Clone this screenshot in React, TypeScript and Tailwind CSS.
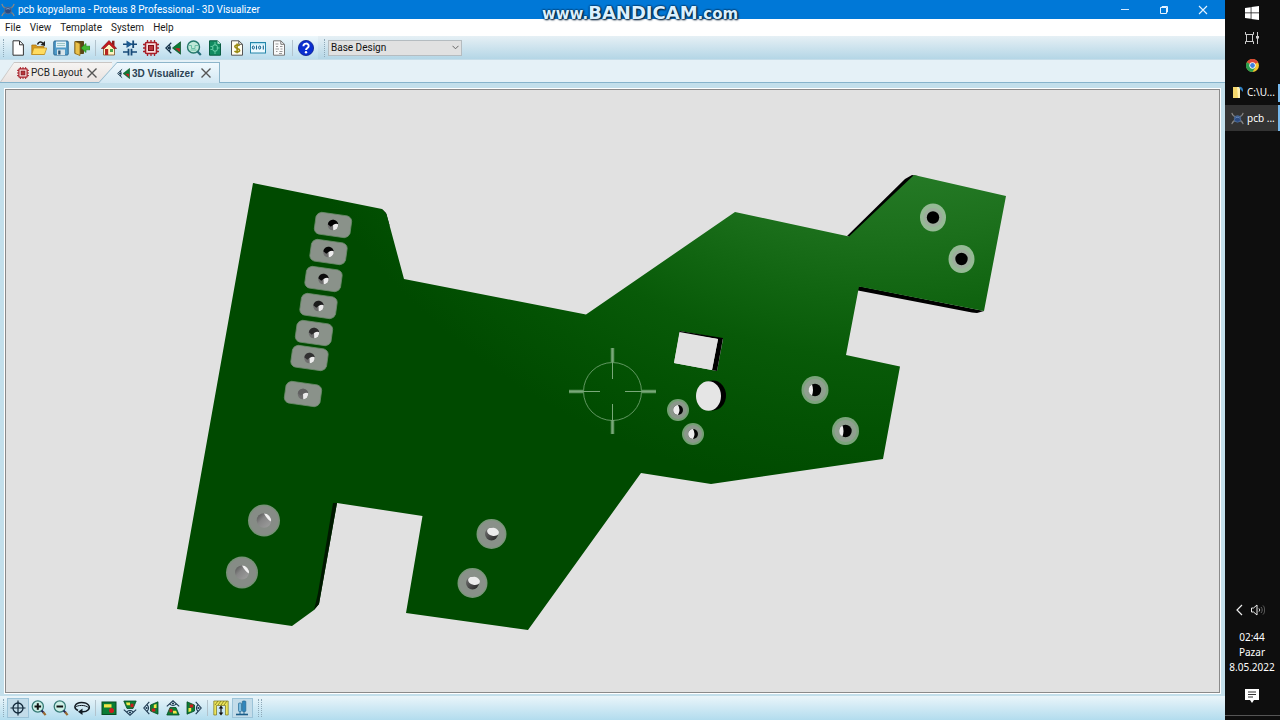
import type { ReactNode } from 'react';

const UI = "font-['Roboto','Open_Sans',sans-serif]";
const TRAY = "font-['Noto_Sans','Open_Sans',sans-serif]";
const FORM = "font-['Roboto','Liberation_Sans',sans-serif]";

function Icon({ children, size = 16 }: { children: ReactNode; size?: number }) {
  return (
    <svg width={size} height={size} viewBox="0 0 16 16" fill="none" aria-hidden="true">
      {children}
    </svg>
  );
}

const NewIcon = () => (
  <Icon>
    <path d="M3 .8h6.600L13.400 4.600V15.200H3z" fill="#fff" stroke="#333" />
    <path d="M9.500 1v3.800h3.800" stroke="#333" />
  </Icon>
);
const OpenIcon = () => (
  <Icon>
    <path d="M.8 14.500V5h4.200l1 1.500h7v8z" fill="#d79a1c" stroke="#a8700c" strokeWidth=".7" />
    <path d="M.8 14.500 2.800 8H15.800l-2.300 6.500z" fill="#ffdc60" stroke="#b98a1c" strokeWidth=".7" />
    <path d="M6.500 4.500C7.500 1.500 10.500 1.200 12 3.500" stroke="#222" strokeWidth="1.600" />
    <path d="M14 1v5L9.500 5z" fill="#222" />
  </Icon>
);
const SaveIcon = () => (
  <Icon>
    <rect x=".8" y="1" width="14.400" height="14" rx="1" fill="#4f9bc9" stroke="#2b668f" />
    <rect x="3" y="1.500" width="10" height="6" fill="#e2f0f6" />
    <path d="M4 3.500h8M4 5.500h8" stroke="#8bb" strokeWidth=".8" />
    <rect x="4" y="9.500" width="8" height="5.500" fill="#d7e4ea" />
    <rect x="5.200" y="10.500" width="2.300" height="4" fill="#28506e" />
  </Icon>
);
const ExitIcon = () => (
  <Icon>
    <path d="M1 1.500h8.500v12H1z" fill="#5b4718" stroke="#5b4718" />
    <path d="M1 1.500 6 3.500V15.500L1 13.500z" fill="#e9c04a" stroke="#8b6714" strokeWidth=".8" />
    <path d="M16 6.200h-4V3.500L7 8l5 4.500V9.800h4z" fill="#42b834" stroke="#1e7d18" strokeWidth=".6" />
  </Icon>
);
const HomeIcon = () => (
  <Icon>
    <path d="M2.500 7v8h11V7L8 2z" fill="#fff5c0" stroke="#7c4c24" strokeWidth=".8" />
    <path d="M11 .8h2.500V6L11 4z" fill="#8c1c1c" />
    <path d="M8 .5.3 8.500h3L8 4l4.700 4.500h3z" fill="#c8161d" stroke="#701014" strokeWidth=".6" />
    <rect x="4" y="9" width="3.200" height="6" fill="#b52420" />
    <rect x="9" y="9" width="3" height="3" fill="#4aa54c" />
  </Icon>
);
const SchematicIcon = () => (
  <Icon>
    <path d="M1 4.200h14M1 12h5.200M9.800 12H15" stroke="#174a78" strokeWidth="1.400" />
    <path d="M4.500.5v7.400l6-3.700z" fill="#1d5b91" />
    <path d="M11.200.5v7.400M6.500 8.800v6.700M9.500 8.800v6.700" stroke="#174a78" strokeWidth="1.800" />
  </Icon>
);
const ChipIcon = ({ size = 16 }: { size?: number }) => (
  <Icon size={size}>
    <path d="M4.500 0v16M8 0v16M11.500 0v16M0 4.500h16M0 8h16M0 11.500h16" stroke="#a72028" strokeWidth="1.300" />
    <rect x="2.500" y="2.500" width="11" height="11" rx="1" fill="#f7dada" stroke="#a81d27" strokeWidth="1.600" />
    <rect x="5.500" y="5.500" width="5" height="5" fill="#b9343a" stroke="#7e1018" />
  </Icon>
);
const VisualizerIcon = ({ size = 16 }: { size?: number }) => (
  <Icon size={size}>
    <path d="M7.500 8 15.500 1.800v12.400z" fill="#0b7d35" stroke="#0a4a22" strokeWidth=".7" />
    <path d="M10 8.200h4.800v4z" fill="#c61f21" />
    <path d="M6.300 2.800.8 8l5.500 5.200M4 4.800c1.500 1.800 1.500 4.600 0 6.400" stroke="#16334a" strokeWidth="1.200" />
    <circle cx="3.800" cy="8" r="1.300" fill="#16334a" />
  </Icon>
);
const SearchIcon = () => (
  <Icon>
    <circle cx="7.500" cy="7" r="6" fill="#bfe9d8" stroke="#25786b" strokeWidth="1.400" />
    <path d="M3 5.500h2.500v3H9v-3h3M4.500 10h6" stroke="#6bbfa6" />
    <path d="m11.500 11.500 3.300 3.500" stroke="#256d79" strokeWidth="2.200" />
  </Icon>
);
const GerberIcon = () => (
  <Icon>
    <path d="M2.500.8h8l3 3v11.400h-11z" fill="#118b60" stroke="#0a5d42" />
    <path d="M10.500.8v3h3z" fill="#ccefe0" />
    <rect x="5.800" y="5" width="4.500" height="6" rx="1.500" stroke="#74d8b0" />
    <path d="M8 2v3m0 6v3M3.500 6.500h2M3.500 9.500h2M10.500 8h2" stroke="#74d8b0" strokeWidth=".8" />
  </Icon>
);
const BomIcon = () => (
  <Icon>
    <path d="M2.500.8h7.300l3.700 3.500v10.900h-11z" fill="#fffdf0" stroke="#555" />
    <path d="M9.800.8v3.500h3.700" stroke="#555" />
    <path d="M10.500 5.800C9.500 4.500 5.800 4.500 5.800 6.600c0 2.300 4.800 1.300 4.800 3.700 0 2.200-3.900 2.200-5.100.8M8.100 3.500v9.800" stroke="#9a8b10" strokeWidth="1.600" />
  </Icon>
);
const BinaryIcon = () => (
  <Icon>
    <rect x=".5" y="2.500" width="15" height="10.500" fill="#edfaff" stroke="#2486aa" />
    <path d="M1 3.800h14" stroke="#8fd3ea" />
    <rect x="2.300" y="6" width="2" height="3" rx="1" stroke="#16648f" />
    <path d="M6.500 5.500v4M13.300 5.500v4" stroke="#16648f" strokeWidth="1.100" />
    <rect x="8.700" y="6" width="2" height="3" rx="1" stroke="#16648f" />
  </Icon>
);
const NotesIcon = () => (
  <Icon>
    <path d="M2.500.8h7.300l3.700 3.500v10.900h-11z" fill="#fafafa" stroke="#777" />
    <path d="M9.800.8v3.500h3.700" stroke="#777" />
    <path d="M4.500 4h3M5 6.500h2m2 0h2.500M4.500 9H8m1.500 0h2M5 11.500h1.500m2 0h3M8 13.500h3" stroke="#999" />
  </Icon>
);
const HelpIcon = () => (
  <Icon>
    <circle cx="8" cy="8" r="7.600" fill="#0a2fd0" stroke="#0a1d8c" strokeWidth=".8" />
    <path d="M5.400 6.200C5.400 2.700 10.700 2.800 10.700 5.900 10.700 8 8 7.800 8 10" stroke="#fff" strokeWidth="1.900" />
    <circle cx="8" cy="12.300" r="1.200" fill="#fff" />
  </Icon>
);
const TargetIcon = () => (
  <Icon>
    <circle cx="8" cy="8" r="5" stroke="#12283a" strokeWidth="1.300" />
    <path d="M8 .5v15M.5 8h15" stroke="#12283a" strokeWidth="1.200" />
  </Icon>
);
const ZoomIcon = ({ plus = false }: { plus?: boolean }) => (
  <Icon>
    <circle cx="6.800" cy="6.500" r="5.600" fill="#ccefe6" stroke="#377b76" strokeWidth="1.300" />
    <path d="M3.500 6.500h6.600" stroke="#111" strokeWidth="2" />
    {plus && <path d="M6.800 3.200v6.600" stroke="#111" strokeWidth="2" />}
    <path d="m10.500 10.500 2.500 2.500" stroke="#225" strokeWidth="1.800" />
    <path d="m12.300 12.300 2.300 2.800" stroke="#9b6a32" strokeWidth="2.200" />
  </Icon>
);
const OrbitIcon = () => (
  <Icon>
    <path d="M4 10.500C-1.500 8 1 2.500 7.500 2.500c7 0 9.500 4.500 6.500 7.500-1.500 1.600-3.500 2-6 1.800" stroke="#111a22" strokeWidth="1.500" />
    <path d="M1.200 7.500C3 4.800 12 4.500 14.800 8" stroke="#111a22" />
    <path d="M8.500 8.500v6.500L4 11.800z" fill="#111a22" />
  </Icon>
);
const TopViewIcon = () => (
  <Icon>
    <rect x="1" y="2" width="14" height="12.500" fill="#0b7d35" stroke="#094c23" />
    <rect x="3" y="4.200" width="7.500" height="3.300" fill="#f1e848" />
    <circle cx="10.500" cy="10.500" r="2.500" fill="#cf1c1e" />
  </Icon>
);
const SideView = ({ turn }: { turn: string }) => (
  <Icon>
    <g transform={turn}>
      <path d="M7.500 5 15 1.800v12.400L7.500 11z" fill="#0b7d35" stroke="#094c23" strokeWidth=".8" />
      <path d="M10.800 4.800 13.500 4v4h-2.700z" fill="#f1e848" />
      <rect x="8.800" y="8.500" width="3.500" height="3" fill="#cf1c1e" />
      <path d="M6.300 1.800.8 8l5.500 6.200M4.200 4.800c1.500 1.800 1.500 4.600 0 6.400" stroke="#1d3850" strokeWidth="1.100" />
      <circle cx="3.500" cy="8" r="1.100" fill="#1d3850" />
    </g>
  </Icon>
);
const HeightIcon = () => (
  <Icon>
    <path d="M.8 1h14.400v14h-2.700V5.500h-9V15H.8z" fill="#ece45b" stroke="#77731c" strokeWidth=".7" />
    <path d="m2 5 3-4m0 4 3-4m0 4 3-4m0 4 3-4" stroke="#77731c" strokeWidth=".8" />
    <path d="M8 7v7" stroke="#111" strokeWidth="1.200" />
    <path d="m8 5.500 2.300 3H5.700zM8 15.500l2.300-3H5.700z" fill="#111" />
  </Icon>
);
const ComponentsIcon = () => (
  <Icon>
    <path d="M2 14.500h12" stroke="#1a5b87" strokeWidth="1.600" />
    <rect x="4.500" y="3" width="3" height="8.500" rx=".8" fill="#7bbce0" stroke="#216792" strokeWidth=".7" />
    <rect x="8.300" y="1" width="3.500" height="10.500" rx=".8" fill="#2f86bd" stroke="#216792" strokeWidth=".7" />
    <path d="M6 11.500v3M10 11.500v3" stroke="#216792" />
  </Icon>
);
const ProteusIcon = ({ size = 14 }: { size?: number }) => (
  <Icon size={size}>
    <path d="M1 1C2 5 4 6 8 6s6-1 7-5M1 15C2 11 4 10 8 10s6 1 7 5" stroke="#8d8a88" strokeWidth="1.400" />
    <path d="M2.500 4 6 7.500 3 13M13.500 4 10 7.500 13 13" stroke="#66727c" />
    <circle cx="8" cy="8.500" r="4" fill="#2b4a80" stroke="#50709b" />
    <path d="M5.500 7.500c1-1.500 4-1.500 5 0" stroke="#8aa7cc" />
  </Icon>
);

type Tool = { name: string; icon: ReactNode; on?: boolean };

const fileTools: Tool[] = [
  { name: 'New project', icon: <NewIcon /> },
  { name: 'Open project', icon: <OpenIcon /> },
  { name: 'Save project', icon: <SaveIcon /> },
  { name: 'Close project', icon: <ExitIcon /> },
];
const moduleTools: Tool[] = [
  { name: 'Home', icon: <HomeIcon /> },
  { name: 'Schematic capture', icon: <SchematicIcon /> },
  { name: 'PCB layout', icon: <ChipIcon /> },
  { name: '3D visualizer', icon: <VisualizerIcon /> },
  { name: 'Design explorer', icon: <SearchIcon /> },
  { name: 'Gerber viewer', icon: <GerberIcon /> },
  { name: 'Bill of materials', icon: <BomIcon /> },
  { name: 'Source code', icon: <BinaryIcon /> },
  { name: 'Project notes', icon: <NotesIcon /> },
];
const navTools: Tool[] = [
  { name: 'Navigate', icon: <TargetIcon />, on: true },
  { name: 'Zoom in', icon: <ZoomIcon plus /> },
  { name: 'Zoom out', icon: <ZoomIcon /> },
  { name: 'Orbit', icon: <OrbitIcon /> },
];
const viewTools: Tool[] = [
  { name: 'Top view', icon: <TopViewIcon /> },
  { name: 'Front view', icon: <SideView turn="rotate(-90 8 8)" /> },
  { name: 'Left view', icon: <SideView turn="rotate(0 8 8)" /> },
  { name: 'Back view', icon: <SideView turn="rotate(90 8 8)" /> },
  { name: 'Right view', icon: <SideView turn="rotate(180 8 8)" /> },
];
const boardTools: Tool[] = [
  { name: 'Height bounds', icon: <HeightIcon /> },
  { name: 'Show components', icon: <ComponentsIcon />, on: true },
];

function ToolGroup({ tools, className }: { tools: Tool[]; className: string }) {
  return (
    <div className={`grid h-full items-center ${className}`}>
      {tools.map((t) => (
        <button
          key={t.name}
          type="button"
          aria-label={t.name}
          className={
            t.on
              ? 'flex h-5 items-center justify-center border border-[#9cc3d8] bg-[#c3dce9]'
              : 'flex h-5 items-center justify-center'
          }
        >
          {t.icon}
        </button>
      ))}
    </div>
  );
}

const Separator = () => <span className="mx-[2px] h-4 w-px shrink-0 bg-[#b2c3cd]" />;
const Grip = () => <span className="h-[18px] shrink-0 border-l border-dotted border-[#8fa9b8]" />;
const CloseMark = () => (
  <svg width="10" height="10" viewBox="0 0 10 10" aria-hidden="true">
    <path d="m.5.500 9 9M9.500.500l-9 9" stroke="#555" strokeWidth="1.400" />
  </svg>
);

function TitleBar() {
  return (
    <header className={`flex h-[19px] shrink-0 items-center bg-[#0078d7] pl-px text-white ${UI}`}>
      <ProteusIcon />
      <h1 className="ml-[3px] flex-1 text-[10px] leading-[19px]">pcb kopyalama - Proteus 8 Professional - 3D Visualizer</h1>
      <div className="flex pr-[3px]">
        <button type="button" aria-label="Minimize" className="flex h-[18px] w-[39px] items-center justify-center">
          <svg width="10" height="10" viewBox="0 0 10 10"><path d="M1 4.500h8" stroke="#d5eaff" /></svg>
        </button>
        <button type="button" aria-label="Restore" className="flex h-[18px] w-[39px] items-center justify-center">
          <svg width="10" height="10" viewBox="0 0 10 10" fill="none" stroke="#e5f2ff"><path d="M1.500 2.500h6v6h-6zM3 2.500v-1h5.500V7h-1" /></svg>
        </button>
        <button type="button" aria-label="Close" className="flex h-[18px] w-[39px] items-center justify-center">
          <svg width="10" height="10" viewBox="0 0 10 10"><path d="m1 1 8 8M9 1 1 9" stroke="#e5f2ff" strokeWidth="1.100" /></svg>
        </button>
      </div>
    </header>
  );
}

function MenuBar() {
  return (
    <nav className={`flex h-[17px] shrink-0 items-center gap-[9px] bg-white pl-[5px] text-[10px] text-[#1a1a1a] ${UI}`}>
      {['File', 'View', 'Template', 'System', 'Help'].map((m) => (
        <button key={m} type="button" className="leading-4">{m}</button>
      ))}
    </nav>
  );
}

function Toolbar() {
  return (
    <div className="flex h-6 shrink-0 border-b border-[#c5dde9] bg-linear-to-b from-[#e6f0f5] to-[#b4d6e6]">
      <div className="flex items-center bg-linear-to-b from-[#edf7fb] to-[#bbdcec] pr-[2px] pl-[3px]">
        <Grip />
        <div className="w-[3px]" />
        <ToolGroup tools={fileTools} className="w-[86px] grid-cols-4" />
        <Separator />
        <ToolGroup tools={moduleTools} className="w-[192px] grid-cols-9" />
        <Separator />
        <button type="button" aria-label="Help" className="flex w-[21px] justify-center"><HelpIcon /></button>
      </div>
      <div className="flex items-center pl-[6px]">
        <Grip />
        <div className="relative ml-[3px] flex items-center">
          <select
            aria-label="Design variant"
            className={`h-4 w-[134px] appearance-none border border-[#b5bcc0] bg-[#e1e1e1] pl-[2px] text-[10px] leading-[13px] text-[#111] ${FORM}`}
          >
            <option>Base Design</option>
          </select>
          <svg className="pointer-events-none absolute right-[3px]" width="7" height="5" viewBox="0 0 7 5" fill="none">
            <path d="m.5.800 3 3 3-3" stroke="#666" />
          </svg>
        </div>
      </div>
    </div>
  );
}

function TabStrip() {
  return (
    <div className={`flex h-[23px] shrink-0 items-end border-b border-[#86b3cb] bg-[#e5f1f7] text-[10px] ${FORM}`}>
      <div className="flex h-5 w-[112px] bg-[#c9c6c4] pt-px [clip-path:polygon(14px_0,100%_0,100%_100%,0_100%)]">
        <div className="flex flex-1 items-center bg-linear-to-b from-[#f6f4f2] to-[#e9e3e1] pl-[17px] text-[#222] [clip-path:polygon(14px_0,100%_0,100%_100%,1px_100%)]">
          <ChipIcon size={12} />
          <button type="button" className="ml-[2px] w-[49px] text-left whitespace-nowrap">PCB Layout</button>
          <button type="button" aria-label="Close PCB Layout" className="ml-[7px]"><CloseMark /></button>
        </div>
      </div>
      <div className="-mr-px -mb-px -ml-[14px] flex h-[21px] w-[122px] bg-[#8db5ca] pt-px pr-px [clip-path:polygon(19px_0,100%_0,100%_100%,0_100%)]">
        <div className="flex flex-1 items-center bg-linear-to-b from-[#f1f9fd] to-[#d3e8f3] pl-[19px] font-['Liberation_Sans',Arial,sans-serif] font-bold text-[#2c4354] [clip-path:polygon(19px_0,100%_0,100%_100%,1px_100%)]">
          <VisualizerIcon size={13} />
          <button type="button" className="ml-[2px] whitespace-nowrap">3D Visualizer</button>
          <button type="button" aria-label="Close 3D Visualizer" className="ml-[7px]"><CloseMark /></button>
        </div>
      </div>
    </div>
  );
}

const slots = [
  { x: 333, y: 225, shade: '#000' },
  { x: 328.500, y: 252, shade: '#050505' },
  { x: 323.500, y: 279, shade: '#0c0c0c' },
  { x: 318.500, y: 306, shade: '#1c1c1c' },
  { x: 314, y: 333, shade: '#2a2a2a' },
  { x: 309.500, y: 358, shade: '#303030' },
  { x: 303, y: 394, shade: '#606060' },
];

const pads = [
  { x: 264, y: 520.500, hole: 7.300 },
  { x: 242, y: 572.500, hole: 7 },
];

function Board() {
  return (
    <svg className="block size-full" viewBox="6 90 1213 602" role="img" aria-label="Board model">
      <defs>
        <radialGradient id="mask" gradientUnits="userSpaceOnUse" cx="900" cy="-200" r="700">
          <stop offset=".53" stopColor="#257a26" />
          <stop offset=".62" stopColor="#1c701c" />
          <stop offset=".72" stopColor="#106410" />
          <stop offset=".8" stopColor="#085a08" />
          <stop offset=".9" stopColor="#035203" />
          <stop offset="1" stopColor="#004a00" />
        </radialGradient>
        <linearGradient id="barrel" x1="0" y1="0" x2="1" y2="1">
          <stop offset="0" stopColor="#777" />
          <stop offset=".6" stopColor="#444" />
          <stop offset="1" stopColor="#222" />
        </linearGradient>
        <linearGradient id="copper" x1="0" y1="0" x2="1" y2="1">
          <stop offset="0" stopColor="#4c4c4c" />
          <stop offset=".4" stopColor="#858585" />
          <stop offset="1" stopColor="#a0a0a0" />
        </linearGradient>
      </defs>
      <path d="M847 236 905 179l7-4 6 1-66 62zM858 286l126 25-7 2-5-.5L858 290.500zM382 209l4 4 4 14z" fill="#000" />
      <path
        fill="url(#mask)"
        fillRule="evenodd"
        d="M253 183 382 209 386.500 214 404 279 586 314.500 735 212 849 236.500 914 175 1006 196 984 311 859 286.500 846 355 900 366.500 883 459 711 484 641 473 528 630 406 613 422.500 516 337 503 319 604 314 610 292 626 177 609zM680 331 723 339 717 371 674 363z"
      />
      <path d="M333 503h4l-18 101-5 6 4-17z" fill="#001800" />
      <path d="m680 331 43 7-6 33-5-1 6-31-39-6z" fill="#000" />
      <path d="m679.500 332 38.500 7-6 31-38-7z" fill="#e1e1e1" />
      <ellipse cx="713" cy="395.500" rx="13" ry="15" fill="#000" />
      <ellipse cx="708.500" cy="396" rx="12.500" ry="14.800" fill="#e5e5e5" />

      {slots.map((s) => (
        <g key={s.y} transform={`translate(${s.x} ${s.y}) rotate(8)`}>
          <path d="M-13-11H13Q17.500-10 18-6V6Q17 10 13 11H-13Q-17.500 10-18 6V-6Q-17-10-13-11z" fill="#8a928a" stroke="#6b8b6b" strokeWidth=".8" />
          <circle r="5.300" fill="#6e6e6e" />
          <path d="M-5.200 0A5.200 5.200 0 0 1 5.200 0Q1-2-2 2z" fill={s.shade} />
          <path d="M0 0Q3-2.500 5-1.500A5.300 5.300 0 0 1 1 5.200z" fill="#ececec" />
        </g>
      ))}

      {pads.map((p) => (
        <g key={p.y} transform={`translate(${p.x} ${p.y})`}>
          <circle r="16" fill="#779277" />
          <circle r="14.500" fill="#868c86" />
          <circle r={p.hole} fill="url(#copper)" />
          <path d="M0-6.900A7 7 0 0 1 6.900 1Q3-1 0-6.900z" fill="#f2f2f2" />
        </g>
      ))}

      {[[491.500, 534], [472.500, 583]].map(([x, y]) => (
        <g key={y} transform={`translate(${x} ${y})`}>
          <circle r="15" fill="#7a977a" />
          <circle r="13.500" fill="#899189" />
          <circle r="6.500" fill="url(#barrel)" />
          <ellipse cx="1" cy="-2.500" rx="6" ry="4" fill="#ececec" transform="rotate(12)" />
        </g>
      ))}

      {[[678, 410], [693, 434]].map(([x, y]) => (
        <g key={y} transform={`translate(${x} ${y})`}>
          <circle r="11" fill="#73a073" />
          <circle r="9" fill="#8b978b" />
          <circle r="5" fill="#050505" />
          <path d="M0-4.900Q3 0 0 4.900A4.900 4.900 0 0 1 0-4.900z" fill="#ececec" />
        </g>
      ))}

      {[[815, 390], [845.500, 431]].map(([x, y]) => (
        <g key={y} transform={`translate(${x} ${y})`}>
          <ellipse rx="13.500" ry="14" fill="#7ba47b" />
          <circle r="11" fill="#8f9f8f" />
          <circle r="6.200" fill="#020202" />
          <path d="M-3-5.400Q-1 0-3 5.400A6 6 0 0 1-3-5.400z" fill="#ececec" />
        </g>
      ))}

      {[[933, 217.500], [961.500, 259]].map(([x, y]) => (
        <g key={y} transform={`translate(${x} ${y})`}>
          <ellipse rx="13" ry="14" fill="#95ba95" />
          <circle r="9.500" fill="#9dad9d" />
          <circle r="6.200" fill="#000" />
        </g>
      ))}

      <g stroke="#79a879" fill="none">
        <circle cx="612.500" cy="391.500" r="29" strokeWidth=".8" />
        <path d="M612.500 348v31M612.500 404v30M569 391.500h31M625 391.500h31" />
        <path d="M612.500 348v14M612.500 420v14M569 391.500h14M642 391.500h14" strokeWidth="3.500" strokeOpacity=".8" />
      </g>
    </svg>
  );
}

function BottomBar() {
  return (
    <div className="flex h-6 shrink-0 bg-linear-to-b from-[#eaf5fa] to-[#b2dcee]">
      <div className="flex items-center pl-[3px]">
        <Grip />
        <div className="w-[3px]" />
        <ToolGroup tools={navTools} className="w-[86px] grid-cols-4" />
        <Separator />
        <ToolGroup tools={viewTools} className="w-[107px] grid-cols-5" />
        <Separator />
        <ToolGroup tools={boardTools} className="w-[43px] grid-cols-2" />
        <div className="w-[5px]" />
        <Grip />
        <div className="w-[2px]" />
        <Grip />
      </div>
    </div>
  );
}

function Taskbar() {
  return (
    <aside className={`flex w-[55px] shrink-0 flex-col bg-[#0e0e0e] text-[10px] text-white ${TRAY}`}>
      <button type="button" aria-label="Start" className="flex h-[25px] items-center justify-center pr-px">
        <svg width="14" height="14" viewBox="0 0 14 14" fill="#fff">
          <path d="M0 2 5.700 1.200v5.400H0zM6.400 1.100 14 0v6.600H6.400zM0 7.300h5.700v5.500L0 12zM6.400 7.300H14V14l-7.600-1.100z" />
        </svg>
      </button>
      <button type="button" aria-label="Task view" className="flex h-[26px] items-center justify-center pr-px">
        <svg width="14" height="12" viewBox="0 0 14 12" fill="none" stroke="#ccc">
          <path d="M.5 0v2.500h8V0M.5 12V9.500h8V12M1.500 2.500v7M7.500 2.500v7M12.500 0v12" />
          <path d="M11 4h3v2.500h-3z" fill="#ccc" stroke="none" />
        </svg>
      </button>
      <button type="button" aria-label="Chrome" className="flex h-[29px] items-center justify-center pr-px">
        <svg width="13" height="13" viewBox="0 0 12 12">
          <circle cx="6" cy="6" r="6" fill="#f4c430" />
          <path d="M6 6 .8 3A6 6 0 0 1 11.200 3z" fill="#dc4437" />
          <path d="M6 6 .8 3A6 6 0 0 0 6 12l2.600-4.500z" fill="#2a9d50" />
          <circle cx="6" cy="6" r="2.900" fill="#fff" />
          <circle cx="6" cy="6" r="2.200" fill="#3e7fe0" />
        </svg>
      </button>
      <button type="button" className="flex h-[25px] items-center pl-[7px]">
        <svg width="12" height="13" viewBox="0 0 12 13">
          <path d="M1 1h7v11H1z" fill="#f4d76b" />
          <path d="M5 1h3v11H6z" fill="#fff1b2" />
          <path d="M7 1c2-1 4 1 4 3v2L8 3z" fill="#3180c1" />
        </svg>
        <span className="ml-[3px] flex-1 text-left">C:\U...</span>
        <span className="h-[18px] w-[2px] bg-[#76b9ed]" />
      </button>
      <button type="button" className="flex h-[26px] items-center bg-[#333] pl-[6px]">
        <ProteusIcon size={13} />
        <span className="ml-[3px] flex-1 text-left whitespace-nowrap">pcb ...</span>
        <span className="h-full w-[2px] bg-[#76b9ed]" />
      </button>
      <div className="mt-auto flex items-center justify-center gap-2 pr-[4px]">
        <button type="button" aria-label="Show hidden icons">
          <svg width="7" height="12" viewBox="0 0 7 12" fill="none"><path d="M6 1 1 6l5 5" stroke="#eee" strokeWidth="1.200" /></svg>
        </button>
        <button type="button" aria-label="Volume">
          <svg width="14" height="12" viewBox="0 0 14 12" fill="none" stroke="#eee">
            <path d="M.5 4h2L6 1v10L2.500 8h-2z" />
            <path d="M8 4.500c.8.800.8 2.200 0 3" />
            <path d="M10 3c1.600 1.600 1.600 4.400 0 6M12 1.500c2.300 2.300 2.300 6.700 0 9" stroke="#666" />
          </svg>
        </button>
      </div>
      <div className="mt-[14px] pr-px text-center leading-[15px]">
        <div>02:44</div>
        <div>Pazar</div>
        <div>8.05.2022</div>
      </div>
      <button type="button" aria-label="Notifications" className="mt-[14px] flex justify-center pr-px">
        <svg width="14" height="14" viewBox="0 0 14 14">
          <path d="M0 0h14v11H9l-2 3-2-3H0z" fill="#fff" />
          <path d="M3 3h8M3 5.500h8M3 8h5" stroke="#333" />
        </svg>
      </button>
      <div className="mt-[12px] h-[5px] border-t border-[#555]" />
    </aside>
  );
}

export default function App() {
  return (
    <div className="relative flex h-screen w-full overflow-hidden">
      <div className="flex min-w-0 flex-1 flex-col bg-[#c3dfeb]">
        <TitleBar />
        <MenuBar />
        <Toolbar />
        <TabStrip />
        <main className="flex min-h-0 flex-1 flex-col px-1 pt-[5px] pb-[2px]">
          <div className="min-h-0 flex-1 border border-white">
            <div className="h-full border border-[#8a8a8a] bg-[#e1e1e1]">
              <Board />
            </div>
          </div>
        </main>
        <BottomBar />
      </div>
      <Taskbar />
      <div className="pointer-events-none absolute top-[3px] left-1/2 flex -translate-x-1/2 items-baseline font-['DejaVu_Sans',sans-serif] text-[15px] leading-5 font-bold text-[#d9f0ff] [text-shadow:0_0_2px_#05203a,0_0_2px_#05203a,1px_1px_2px_#05203a]">
        <span>www.</span>
        <span className="text-[18px]">BANDICAM</span>
        <span>.com</span>
      </div>
    </div>
  );
}
